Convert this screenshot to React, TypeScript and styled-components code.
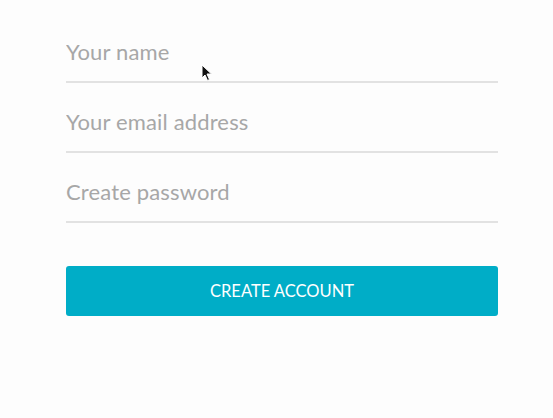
import React from "react";
import styled, { createGlobalStyle } from "styled-components";

const Global = createGlobalStyle`
  html, body { margin: 0; padding: 0; background: #fdfdfd; }
  body { font-family: Lato, "Noto Sans", sans-serif; }
`;

const Page = styled.div`
  position: relative;
  width: 553px;
  height: 418px;
  box-sizing: border-box;
  padding: 33px 55px 0 66px;
`;

const Form = styled.form`
  display: flex;
  flex-direction: column;
  gap: 20px;
  width: 432px;
`;

const Field = styled.input`
  display: block;
  box-sizing: border-box;
  width: 100%;
  height: 50px;
  margin: 0;
  padding: 0 0 12px 0;
  border: none;
  border-bottom: 2px solid #e2e2e2;
  background: transparent;
  font-family: Lato, "Noto Sans", sans-serif;
  font-size: 22px;
  letter-spacing: 0.15px;
  color: #555;
  outline: none;
  &::placeholder { color: #a7a7a7; }
`;

const Button = styled.button`
  margin-top: 23px;
  height: 50px;
  width: 100%;
  border: none;
  border-radius: 3px;
  background: #00adc7;
  color: #fff;
  font-family: Lato, "Noto Sans", sans-serif;
  font-size: 16.5px;
  padding-bottom: 2px;
  cursor: pointer;
`;

const Cursor = styled.svg`
  position: absolute;
  left: 201px;
  top: 64px;
`;

export default function App() {
  return (
    <Page>
      <Global />
      <Form onSubmit={(e) => e.preventDefault()}>
        <Field placeholder="Your name" />
        <Field placeholder="Your email address" />
        <Field type="password" placeholder="Create password" />
        <Button type="submit">CREATE ACCOUNT</Button>
      </Form>
      <Cursor width="13" height="18" viewBox="0 0 13 18">
        <path d="M1 1 L1 14 L4 11 L6.5 16.5 L8.5 15.5 L6 10 L10.5 10 Z" fill="#111" stroke="#fff" strokeWidth="1" strokeLinejoin="round" />
      </Cursor>
    </Page>
  );
}
